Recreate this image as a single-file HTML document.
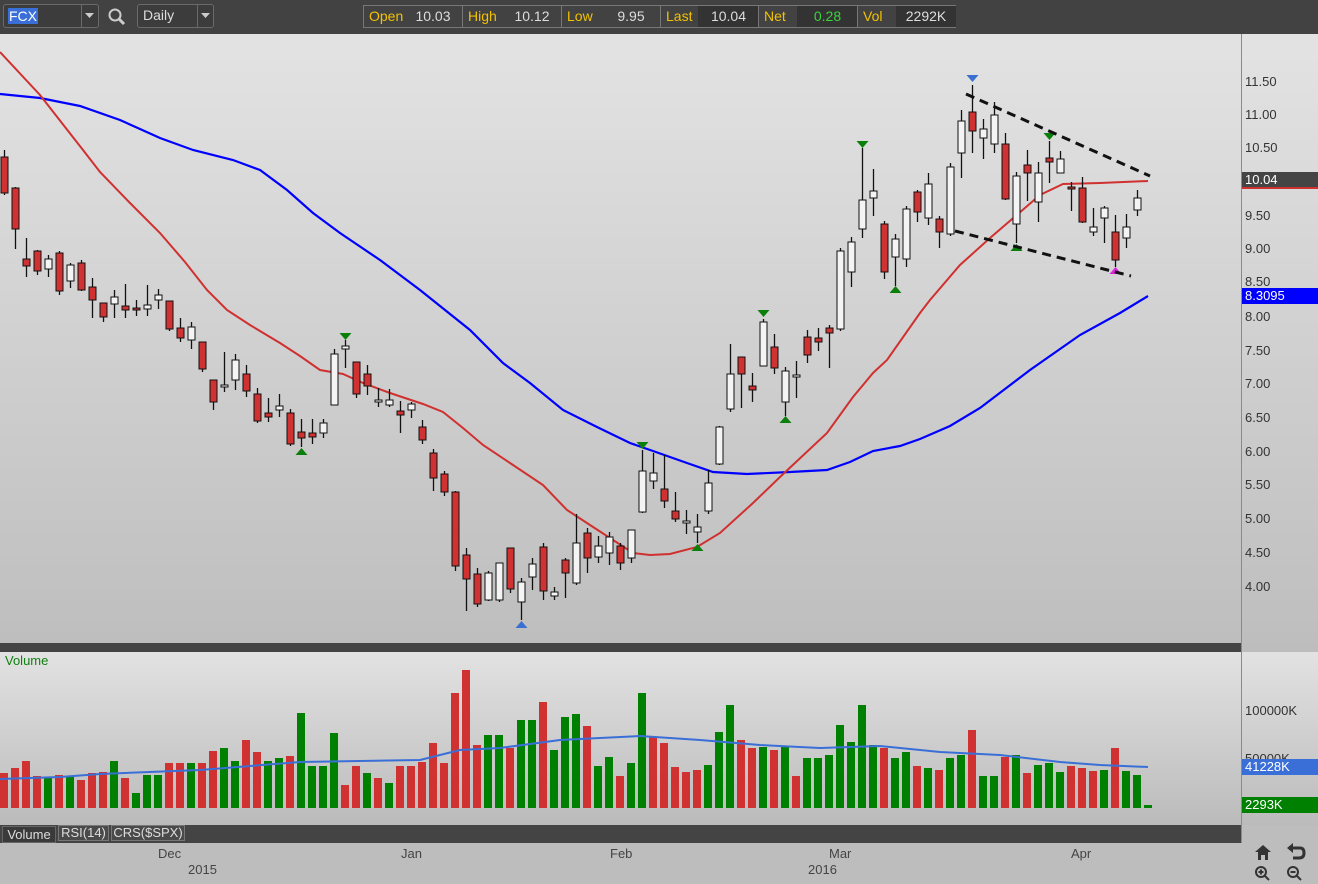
<!DOCTYPE html>
<html><head><meta charset="utf-8">
<style>
*{margin:0;padding:0;box-sizing:border-box}
body{width:1318px;height:884px;overflow:hidden;background:#bdbdbd;font-family:"Liberation Sans",Arial,sans-serif;position:relative}
.abs{position:absolute}
#top{left:0;top:0;width:1318px;height:34px;background:#424242}
.box{border:1px solid #6a6a6a;border-radius:3px;background:#3c3c3c;color:#ddd;font-size:14px}
.q{position:absolute;top:5px;height:23px;border:1px solid #777;font-size:14px;line-height:21px}
.q span{position:absolute;top:0;height:21px}
.lab{color:#f2c200;left:5px}
.val{color:#ddd;right:0;width:60px;text-align:center;}
.dv{background:#333}
.ax{font-size:13px;color:#333;position:absolute;left:1245px}
</style></head><body>
<div id="top" class="abs"></div>
<div class="abs box" style="left:3px;top:4px;width:96px;height:24px"></div>
<div class="abs" style="left:8px;top:8px;background:#3a6fd8;color:#fff;font-size:14px;line-height:16px;padding:0 1px">FCX</div>
<div class="abs" style="left:81px;top:5px;width:1px;height:22px;background:#6a6a6a"></div>
<svg class="abs" style="left:85px;top:13px" width="10" height="6"><path d="M0 0H9L4.5 5Z" fill="#ccc"/></svg>
<svg class="abs" style="left:107px;top:7px" width="20" height="20"><circle cx="8" cy="8" r="5.5" fill="none" stroke="#ccc" stroke-width="2"/><path d="M12 12L17 17" stroke="#ccc" stroke-width="3"/></svg>
<div class="abs box" style="left:137px;top:4px;width:77px;height:24px"></div>
<div class="abs" style="left:143px;top:7px;color:#ddd;font-size:14px">Daily</div>
<div class="abs" style="left:197px;top:5px;width:1px;height:22px;background:#6a6a6a"></div>
<svg class="abs" style="left:201px;top:13px" width="10" height="6"><path d="M0 0H9L4.5 5Z" fill="#ccc"/></svg>

<div class="q" style="left:363px;width:100px"><span class="lab">Open</span><span class="val" style="left:40px;width:58px">10.03</span></div>
<div class="q" style="left:462px;width:100px"><span class="lab">High</span><span class="val" style="left:40px;width:58px">10.12</span></div>
<div class="q" style="left:561px;width:100px"><span class="lab">Low</span><span class="val" style="left:40px;width:58px">9.95</span></div>
<div class="q" style="left:660px;width:99px"><span class="lab">Last</span><span class="val dv" style="left:37px;width:61px">10.04</span></div>
<div class="q" style="left:758px;width:100px"><span class="lab">Net</span><span class="val dv" style="left:38px;width:61px;color:#3ad43a">0.28</span></div>
<div class="q" style="left:857px;width:99px"><span class="lab">Vol</span><span class="val dv" style="left:38px;width:60px">2292K</span></div>

<svg class="abs" style="left:0;top:34px" width="1318" height="850" id="ch">
<defs>
<linearGradient id="g1" x1="0" y1="0" x2="0" y2="1"><stop offset="0" stop-color="#e3e3e3"/><stop offset="1" stop-color="#bebebe"/></linearGradient>
<linearGradient id="g2" x1="0" y1="0" x2="0" y2="1"><stop offset="0" stop-color="#e2e2e2"/><stop offset="1" stop-color="#bbbbbb"/></linearGradient>
</defs>
<rect x="0" y="0" width="1318" height="609" fill="url(#g1)"/>
<rect x="0" y="609" width="1318" height="9" fill="#444"/>
<rect x="1241" y="609" width="77" height="9" fill="#bdbdbd"/>
<rect x="0" y="618" width="1241" height="173" fill="url(#g2)"/>
<rect x="1242" y="618" width="76" height="173" fill="url(#g2)"/>
<rect x="0" y="791" width="1241" height="18" fill="#444"/>
<rect x="0" y="809" width="1318" height="41" fill="#bdbdbd"/>
<rect x="1241" y="0" width="1" height="809" fill="#8a8a8a"/>
<g id="g"></g>
</svg>

<div class="ax" style="top:74px">11.50</div>
<div class="ax" style="top:107px">11.00</div>
<div class="ax" style="top:140px">10.50</div>
<div class="ax" style="top:208px">9.50</div>
<div class="ax" style="top:241px">9.00</div>
<div class="ax" style="top:274px">8.50</div>
<div class="ax" style="top:309px">8.00</div>
<div class="ax" style="top:343px">7.50</div>
<div class="ax" style="top:376px">7.00</div>
<div class="ax" style="top:410px">6.50</div>
<div class="ax" style="top:444px">6.00</div>
<div class="ax" style="top:477px">5.50</div>
<div class="ax" style="top:511px">5.00</div>
<div class="ax" style="top:545px">4.50</div>
<div class="ax" style="top:579px">4.00</div>
<div class="abs" style="left:1242px;top:172px;width:76px;height:17px;background:#444;border-bottom:2px solid #d03030;color:#fff;font-size:13px;padding-left:3px;line-height:16px">10.04</div>
<div class="abs" style="left:1242px;top:288px;width:76px;height:16px;background:#0000ff;color:#fff;font-size:13px;padding-left:3px;line-height:16px">8.3095</div>
<div class="ax" style="top:703px">100000K</div>
<div class="ax" style="top:751px">50000K</div>
<div class="abs" style="left:1242px;top:759px;width:76px;height:16px;background:#3a6fd8;color:#fff;font-size:13px;padding-left:3px;line-height:16px">41228K</div>
<div class="abs" style="left:1242px;top:797px;width:76px;height:16px;background:#008000;color:#fff;font-size:13px;padding-left:3px;line-height:16px">2293K</div>
<div class="abs" style="left:5px;top:653px;color:#108010;font-size:13px">Volume</div>

<div class="abs" style="left:2px;top:826px;width:54px;height:17px;background:#3a3a3a;border:1px solid #666;color:#ddd;font-size:13px;text-align:center;line-height:15px">Volume</div>
<div class="abs" style="left:58px;top:825px;width:51px;height:16px;background:#4a4a4a;border:1px solid #777;color:#ddd;font-size:13px;text-align:center;line-height:14px">RSI(14)</div>
<div class="abs" style="left:111px;top:825px;width:74px;height:16px;background:#4a4a4a;border:1px solid #777;color:#ddd;font-size:13px;text-align:center;line-height:14px">CRS($SPX)</div>

<div class="abs" style="left:158px;top:846px;font-size:13px;color:#444">Dec</div>
<div class="abs" style="left:188px;top:862px;font-size:13px;color:#444">2015</div>
<div class="abs" style="left:401px;top:846px;font-size:13px;color:#444">Jan</div>
<div class="abs" style="left:610px;top:846px;font-size:13px;color:#444">Feb</div>
<div class="abs" style="left:829px;top:846px;font-size:13px;color:#444">Mar</div>
<div class="abs" style="left:808px;top:862px;font-size:13px;color:#444">2016</div>
<div class="abs" style="left:1071px;top:846px;font-size:13px;color:#444">Apr</div>

<svg class="abs" style="left:1252px;top:843px" width="60" height="40">
<path d="M3 9L11 2L19 9H16V17H13V12H9V17H6V9Z" fill="#333"/>
<path d="M39 5H48Q52 5 52 10Q52 15 47 15H41" fill="none" stroke="#333" stroke-width="3"/><path d="M35 5L41 0V10Z" fill="#333"/>
<circle cx="9" cy="29" r="5" fill="none" stroke="#333" stroke-width="2"/><path d="M13 33L17 37M6.5 29H11.5M9 26.5V31.5" stroke="#333" stroke-width="2"/>
<circle cx="41" cy="29" r="5" fill="none" stroke="#333" stroke-width="2"/><path d="M45 33L49 37M38.5 29H43.5" stroke="#333" stroke-width="2"/>
</svg>

<script>
var C=[[0,157,193,150,195],[0,188,229,187,249],[0,259,266,238,277],[0,251,271,250,275],[1,259,269,255,277],[0,253,291,251,295],[1,265,281,263,288],[0,263,290,260,291],[0,287,300,278,318],[0,303,317,303,322],[1,297,304,290,318],[0,306,310,284,318],[0,308,310,300,316],[1,305,309,285,316],[1,295,300,289,309],[0,301,329,301,331],[0,328,338,318,342],[1,327,340,322,349],[0,342,369,342,372],[0,380,402,380,410],[1,385,387,352,392],[1,360,380,354,390],[0,374,391,365,397],[0,394,421,388,423],[0,413,417,398,422],[1,406,410,394,417],[0,413,444,409,446],[0,432,438,419,447],[0,433,437,419,444],[1,423,433,419,438],[1,354,405,349,405],
[1,346,349,340,368],[0,362,394,362,398],[0,374,386,365,395],[1,400,402,388,407],[1,400,405,389,407],[0,411,415,401,433],[1,404,410,402,418],[0,427,440,420,444],[0,453,478,449,491],[0,474,492,471,496],[0,492,566,491,571],[0,555,579,548,611],[0,574,604,568,607],[1,573,600,571,601],[1,563,600,563,602],[0,548,589,548,593],[1,582,602,578,620],[1,564,577,558,590],[0,547,591,543,600],[1,592,596,587,600],[0,560,573,558,598],[1,543,583,514,585],[0,533,558,528,573],[1,546,557,536,563],[1,537,553,532,565],[0,546,563,543,570],[1,530,558,530,563],[1,471,512,450,513],
[1,473,481,453,489],[0,489,501,455,508],[0,511,519,492,522],[1,521,523,510,534],[1,527,532,514,543],[1,483,511,470,514],[1,427,464,426,465],[1,374,409,344,412],[0,357,374,357,408],[0,386,390,373,402],[1,322,366,319,366],[0,347,368,334,374],[1,371,402,367,416],[1,375,377,361,398],[0,337,355,330,363],[0,338,342,328,351],[0,328,333,325,368],[1,251,329,248,331],[1,242,272,237,287],[1,200,229,148,238],[1,191,198,169,216],[0,224,272,221,279],[1,239,257,234,286],[1,209,259,206,267],[0,192,212,190,222],
[1,184,218,173,225],[0,219,232,216,248],[1,167,234,163,236],[1,121,153,110,178],[0,112,131,85,153],[1,129,138,119,159],[1,115,144,102,153],[0,144,199,133,200],[1,176,224,172,243],[0,165,173,150,201],[1,173,202,162,222],[0,158,162,141,183],[1,159,173,151,173],[0,187,189,182,211],[0,188,222,177,223],[1,227,232,208,236],[1,208,218,206,243],[0,232,260,215,267],[1,227,238,214,248],[1,198,210,190,216]];
var V=[[0,773],[0,768],[0,761],[0,776],[1,778],[0,775],[1,776],[0,780],[0,773],[0,772],[1,761],[0,778],[1,793],[1,775],[1,775],[0,763],[0,763],[1,763],[0,763],[0,751],[1,748],[1,761],[0,740],[0,752],[1,761],[1,758],[0,756],[1,713],[1,766],[1,766],[1,733],[0,785],[0,766],[1,773],[0,778],[1,783],[0,766],[0,766],[0,762],[0,743],[0,763],[0,693],[0,670],[0,745],[1,735],[1,735],[0,748],[1,720],[1,720],[0,702],[1,750],[1,717],[1,714],[0,726],[1,766],[1,757],[0,776],[1,763],[1,693],[0,737],[0,743],[0,767],[0,772],[0,770],[1,765],[1,732],[1,705],[0,740],[0,748],[1,747],[0,750],[1,747],[0,776],[1,758],[1,758],[1,755],[1,725],[1,742],[1,705],[1,745],[0,748],[1,758],[1,752],[0,766],[1,768],[0,770],[1,758],[1,755],[0,730],[1,776],[1,776],[0,757],[1,755],[0,773],[1,765],[1,763],[1,772],[0,766],[0,768],[0,771],[1,770],[0,748],[1,771],[1,775]];
var s='',o=-34;
function P(a){return a.map(function(p){return p[0]+','+(p[1]+o)}).join(' ')}
// MAs
s+='<polyline fill="none" stroke="#0000ff" stroke-width="2.2" points="'+P([[0,94],[40,98],[80,106],[120,120],[160,138],[193,150],[233,160],[260,170],[287,190],[313,213],[340,233],[380,260],[420,290],[470,330],[503,363],[530,383],[563,410],[597,427],[630,443],[653,451],[687,463],[713,472],[747,474],[790,472],[827,470],[850,462],[873,451],[900,446],[920,439],[950,426],[980,408],[1030,370],[1080,335],[1120,313],[1148,296]])+'"/>';
s+='<polyline fill="none" stroke="#d03030" stroke-width="2" points="'+P([[0,52],[40,95],[83,150],[100,172],[130,203],[160,233],[185,262],[207,290],[227,310],[250,325],[280,343],[300,356],[320,370],[343,374],[363,383],[390,393],[423,404],[443,412],[463,428],[483,445],[510,463],[543,485],[567,510],[590,525],[610,538],[633,553],[650,555],[670,554],[697,547],[720,533],[753,503],[780,477],[827,433],[853,397],[873,373],[887,360],[920,313],[930,300],[960,265],[990,238],[1040,195],[1063,184],[1100,183],[1148,181]])+'"/>';
// candles
C.forEach(function(c,i){var x=4+11*i;s+='<line x1="'+(x+.5)+'" x2="'+(x+.5)+'" y1="'+(c[3]+o)+'" y2="'+(c[4]+o)+'" stroke="#111" stroke-width="1.3"/>';
var h=Math.max(c[2]-c[1],2);s+='<rect x="'+(x-3)+'" y="'+(c[1]+o)+'" width="7" height="'+h+'" fill="'+(c[0]?'#f4f4f4':'#d03232')+'" stroke="#111" stroke-width="1"/>';});
// markers
function tri(x,y,up,col){x+=.5;y+=o;s+='<path d="'+(up?'M'+(x-6)+' '+(y+3)+'L'+x+' '+(y-4)+'L'+(x+6)+' '+(y+3)+'Z':'M'+(x-6)+' '+(y-3)+'L'+x+' '+(y+4)+'L'+(x+6)+' '+(y-3)+'Z')+'" fill="'+col+'"/>';}
var G='#0a800a';
tri(345,336,0,G);tri(763,313,0,G);tri(862,144,0,G);tri(1049,136,0,G);tri(642,445,0,G);
tri(301,452,1,G);tri(697,548,1,G);tri(785,420,1,G);tri(895,290,1,G);tri(1016,248,1,G);
tri(521,625,1,'#3a70d0');tri(972,78,0,'#3a70d0');tri(1115,271,1,'#e020e0');
// trendlines
s+='<line x1="966" y1="'+(94+o)+'" x2="1150" y2="'+(176+o)+'" stroke="#111" stroke-width="3" stroke-dasharray="9,6"/>';
s+='<line x1="955" y1="'+(231+o)+'" x2="1131" y2="'+(276+o)+'" stroke="#111" stroke-width="3" stroke-dasharray="9,6"/>';
// volume
V.forEach(function(v,i){var x=4+11*i;s+='<rect x="'+(x-4)+'" y="'+(v[1]+o)+'" width="8" height="'+(808-v[1])+'" fill="'+(v[0]?'#008000':'#d03232')+'"/>';});
s+='<rect x="1144" y="'+(805+o)+'" width="8" height="3" fill="#008000"/>';
s+='<polyline fill="none" stroke="#3a6fd8" stroke-width="2" points="'+P([[0,779],[60,777],[100,774],[200,770],[300,762],[420,760],[460,750],[500,748],[560,740],[600,738],[640,736],[700,740],[760,745],[820,748],[880,746],[940,752],[1000,755],[1060,762],[1100,765],[1148,767]])+'"/>';
document.getElementById('g').innerHTML=s;
</script>
</body></html>
